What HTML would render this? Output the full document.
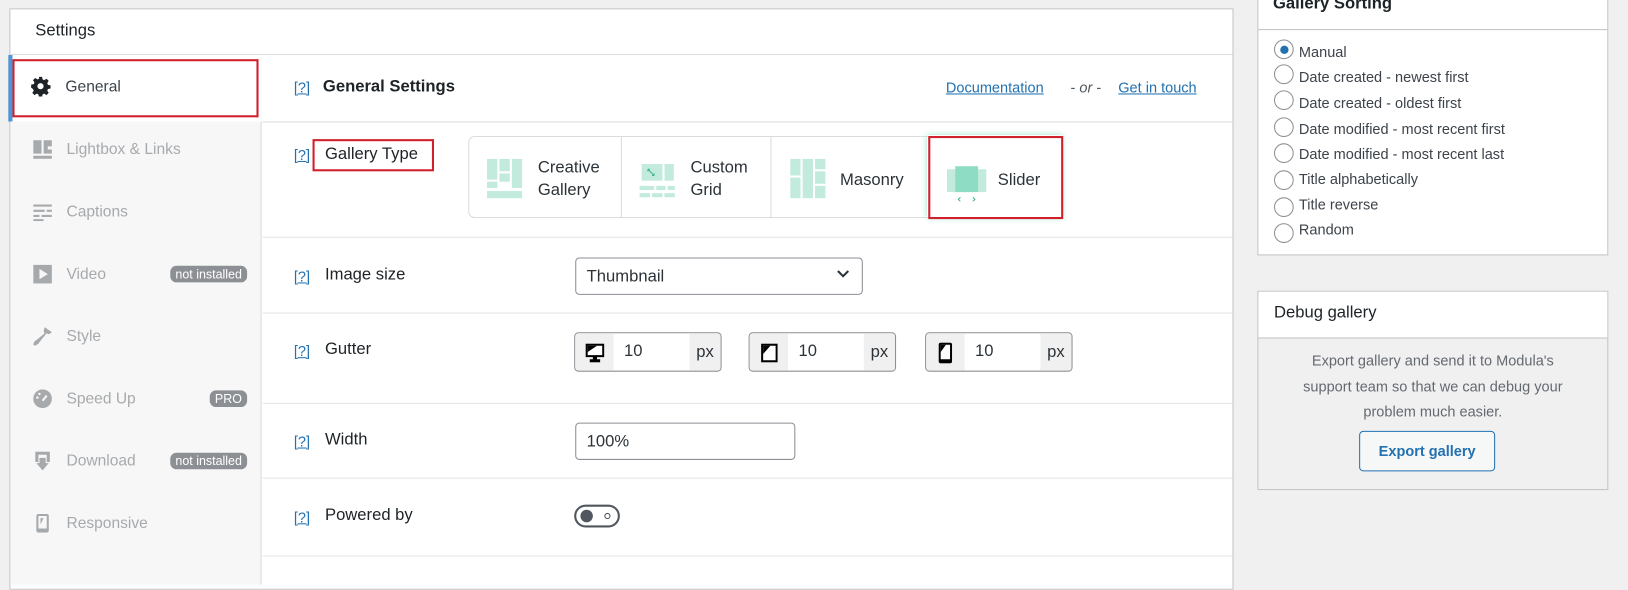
<!DOCTYPE html>
<html><head><meta charset="utf-8"><style>
*{box-sizing:border-box;margin:0;padding:0}
body{width:1628px;height:560px;background:#f0f0f1;font-family:"Liberation Sans",sans-serif;position:relative;overflow:hidden;color:#1d2327}
#w{position:absolute;left:0;top:0;width:1568px;height:540px;transform:scale(1.0383);transform-origin:0 0}
.a{position:absolute}
.panel{left:9px;top:8px;width:1179px;height:560px;background:#fff;border:1px solid #c3c4c7}
.side{left:10px;top:53px;width:242px;height:510px;background:#f7f7f7;border-right:1px solid #dcdcde}
.tab{left:10px;width:242px;height:60px;font-size:15px;color:#a7aaad}
.tab span.t{position:absolute;left:54px;top:50%;transform:translateY(-50%)}
.tab .ic{position:absolute;left:22px;top:50%;transform:translateY(-50%);width:18px;height:18px}
.badge{position:absolute;right:14px;top:50%;transform:translateY(-50%);background:#8c8f94;color:#fff;font-size:12px;border-radius:6px;padding:1px 5px}
.q{color:#2271b1;font-size:14px;text-decoration:underline}
.lbl{font-size:16px;color:#1d2327}
.hr{height:1px;background:#e5e5e5;left:253px;width:934px}
.inp{border:1px solid #8c8f94;border-radius:4px;background:#fff;font-size:16px;color:#2c3338}
.grp{height:38px;width:142px;border:1px solid #8c8f94;border-radius:4px;overflow:hidden;background:#fff}
.grp .l{position:absolute;left:0;top:0;width:37px;height:100%;background:#f0f0f1}
.grp .r{position:absolute;right:0;top:0;width:30px;height:100%;background:#f0f0f1;font-size:16px;text-align:center;line-height:38px;color:#2c3338}
.grp .v{position:absolute;left:47px;top:9px;font-size:16px;color:#2c3338}
.gt{font-size:16px;color:#2c3338;line-height:22px}
.radio{width:19px;height:19px;border:1px solid #8c8f94;border-radius:50%;background:#fff}
.ro{font-size:14px;color:#3c434a}
</style></head><body><div id="w">
<div class="a panel"></div>
<div class="a" style="left:34px;top:21px;font-size:16px;">Settings</div>
<div class="a" style="left:10px;top:52px;width:1177px;height:1px;background:#dcdcde"></div>
<div class="a side"></div>
<div class="a" style="left:10px;top:53px;width:242px;height:64px;background:#fff"></div>
<div class="a" style="left:8px;top:53px;width:4px;height:64px;background:#4f94d4"></div>
<div class="a" style="left:12px;top:57px;width:237px;height:56px;border:2px solid #d0202b"></div>
<svg class="a" style="left:29px;top:73px" width="20" height="20" viewBox="0 0 20 20"><path fill="#1d2327" d="M8.5 1h3l.5 2.5 1.6.7 2.2-1.4 2.1 2.1-1.4 2.2.7 1.6 2.5.5v3l-2.5.5-.7 1.6 1.4 2.2-2.1 2.1-2.2-1.4-1.6.7-.5 2.5h-3l-.5-2.5-1.6-.7-2.2 1.4-2.1-2.1 1.4-2.2-.7-1.6L1 11.5v-3l2.5-.5.7-1.6-1.4-2.2 2.1-2.1 2.2 1.4 1.6-.7zM10 7a3 3 0 100 6 3 3 0 000-6z"/></svg>
<div class="a" style="left:63px;top:75px;font-size:15px;color:#3c434a">General</div>

<div class="a tab" style="top:114px"><svg class="ic" viewBox="0 0 18 18"><path fill="#a7aaad" d="M0 0h8v13H0zM10 0h8v6h-4v3h4v4h-8zM0 15h18v3H0z"/></svg><span class="t">Lightbox &amp; Links</span></div>
<div class="a tab" style="top:174px"><svg class="ic" viewBox="0 0 18 18"><path fill="#a7aaad" d="M0 2h18v2H0zM0 7h11v2H0zM13 7h5v2h-5zM0 12h6v2H0zM8 12h10v2H8zM0 16h10v2H0z"/></svg><span class="t">Captions</span></div>
<div class="a tab" style="top:234px"><svg class="ic" viewBox="0 0 18 18"><rect width="18" height="18" fill="#a7aaad"/><path fill="#f7f7f7" d="M6 4l8 5-8 5z"/></svg><span class="t">Video</span><span class="badge">not installed</span></div>
<div class="a tab" style="top:294px"><svg class="ic" viewBox="0 0 18 18"><path fill="#a7aaad" d="M11 0l7 5-3 2-2-1-5 6-3 4-3 2-2-1 1-3 4-3 6-5-1-2z"/></svg><span class="t">Style</span></div>
<div class="a tab" style="top:354px"><svg class="ic" viewBox="0 0 18 18"><circle cx="9" cy="9" r="9" fill="#a7aaad"/><path stroke="#f7f7f7" stroke-width="2" d="M9 11l4-5"/><circle cx="4" cy="8" r="1.2" fill="#f7f7f7"/><circle cx="6" cy="4.5" r="1.2" fill="#f7f7f7"/></svg><span class="t">Speed Up</span><span class="badge">PRO</span></div>
<div class="a tab" style="top:414px"><svg class="ic" viewBox="0 0 18 18"><path fill="#a7aaad" d="M2 0h14v10h-3V3H5v7H2zM6 6h6v5h3l-6 7-6-7h3z"/></svg><span class="t">Download</span><span class="badge">not installed</span></div>
<div class="a tab" style="top:474px"><svg class="ic" viewBox="0 0 18 18"><rect x="3" y="0" width="12" height="18" rx="2" fill="#a7aaad"/><path fill="#f7f7f7" d="M5 2h8v12H5z"/><path fill="#a7aaad" d="M7 4h3l-3 6z"/></svg><span class="t">Responsive</span></div>

<div class="a q" style="left:283px;top:76px">[?]</div>
<div class="a" style="left:311px;top:75px;font-size:16px;font-weight:bold">General Settings</div>
<div class="a" style="left:911px;top:76px;font-size:14px;color:#2271b1;text-decoration:underline">Documentation</div>
<div class="a" style="left:1031px;top:76px;font-size:14px;color:#50575e"> - <i>or</i> - </div>
<div class="a" style="left:1077px;top:76px;font-size:14px;color:#2271b1;text-decoration:underline">Get in touch</div>
<div class="a hr" style="top:117px;background:#dcdcde"></div>

<div class="a q" style="left:283px;top:141px">[?]</div>
<div class="a" style="left:301px;top:134px;width:117px;height:31px;border:2px solid #d0202b"></div>
<div class="a lbl" style="left:313px;top:140px">Gallery Type</div>
<div class="a" style="left:451px;top:131px;width:570px;height:79px;border:1px solid #dcdcde;border-radius:6px"></div>
<div class="a" style="left:598px;top:132px;width:1px;height:77px;background:#dcdcde"></div>
<div class="a" style="left:742px;top:132px;width:1px;height:77px;background:#dcdcde"></div>
<svg class="a" style="left:469px;top:153px" width="34" height="38"><g fill="#c2ebde"><rect x="0" y="0" width="10" height="20"/><rect x="12" y="0" width="10" height="12"/><rect x="24" y="0" width="10" height="28"/><rect x="12" y="14" width="10" height="8"/><rect x="0" y="22" width="10" height="6"/><rect x="0" y="31" width="34" height="7"/></g></svg>
<div class="a gt" style="left:518px;top:151px">Creative<br>Gallery</div>
<svg class="a" style="left:616px;top:156px" width="34" height="36"><g fill="#c2ebde"><rect x="2" y="2" width="20" height="16"/><rect x="24" y="2" width="9" height="16"/><rect x="0" y="23" width="14" height="4"/><rect x="16" y="23" width="9" height="4"/><rect x="27" y="23" width="7" height="4"/><rect x="0" y="30" width="10" height="4"/><rect x="12" y="30" width="10" height="4"/><rect x="24" y="30" width="10" height="4"/></g><path d="M8 7l6 6M8 7v2M8 7h2M14 13h-2M14 13v-2" stroke="#3cb592" stroke-width="1"/></svg>
<div class="a gt" style="left:665px;top:151px">Custom<br>Grid</div>
<svg class="a" style="left:761px;top:153px" width="34" height="38"><g fill="#c2ebde"><rect x="0" y="0" width="10" height="16"/><rect x="12" y="0" width="10" height="38"/><rect x="24" y="0" width="10" height="10"/><rect x="0" y="18" width="10" height="20"/><rect x="24" y="12" width="10" height="12"/><rect x="24" y="26" width="10" height="12"/></g></svg>
<div class="a gt" style="left:809px;top:163px">Masonry</div>
<div class="a" style="left:893px;top:130px;width:130px;height:80px;box-shadow:0 0 6px #9fe3cc"></div>
<div class="a" style="left:894px;top:131px;width:130px;height:80px;border:2px solid #d0202b;background:#fff"></div>
<svg class="a" style="left:912px;top:160px" width="38" height="34"><rect x="0" y="3" width="38" height="22" fill="#c2ebde"/><rect x="8" y="0" width="22" height="25" fill="#8fdcc4"/><path d="M13 30l-2 2 2 2M25 30l2 2-2 2" stroke="#3cb592" fill="none" stroke-width="1"/></svg>
<div class="a gt" style="left:961px;top:163px">Slider</div>
<div class="a hr" style="top:228px"></div>

<div class="a q" style="left:283px;top:258px">[?]</div>
<div class="a lbl" style="left:313px;top:256px">Image size</div>
<div class="a inp" style="left:554px;top:248px;width:277px;height:36px;padding:9px 10px">Thumbnail</div>
<svg class="a" style="left:806px;top:260px" width="12" height="8"><path d="M1 1l5 5 5-5" stroke="#2c3338" stroke-width="2" fill="none"/></svg>
<div class="a hr" style="top:301px"></div>

<div class="a q" style="left:283px;top:330px">[?]</div>
<div class="a lbl" style="left:313px;top:328px">Gutter</div>
<div class="a grp" style="left:553px;top:320px"><div class="l"></div><div class="v">10</div><div class="r">px</div>
<svg class="a" style="left:10px;top:10px" width="18" height="18"><path fill="#000" d="M0 0h18v13H11v2h3v3H4v-3h3v-2H0z"/><path fill="#fff" d="M2 2h14v9H2z"/><path d="M2 2h9l-9 6z"/></svg></div>
<div class="a grp" style="left:721px;top:320px"><div class="l"></div><div class="v">10</div><div class="r">px</div>
<svg class="a" style="left:11px;top:10px" width="16" height="18"><path fill="#000" d="M0 0h16v18H0z"/><path fill="#fff" d="M2 2h12v14H2z"/><path d="M2 2h7L2 10z"/></svg></div>
<div class="a grp" style="left:891px;top:320px"><div class="l"></div><div class="v">10</div><div class="r">px</div>
<svg class="a" style="left:12px;top:9px" width="13" height="20"><rect width="13" height="20" rx="2"/><path fill="#fff" d="M2 2h9v14H2z"/><path d="M2 2h5L2 9z"/></svg></div>
<div class="a hr" style="top:388px"></div>

<div class="a q" style="left:283px;top:417px">[?]</div>
<div class="a lbl" style="left:313px;top:415px">Width</div>
<div class="a inp" style="left:554px;top:407px;width:212px;height:36px;padding:9px 10px">100%</div>
<div class="a hr" style="top:460px"></div>

<div class="a q" style="left:283px;top:490px">[?]</div>
<div class="a lbl" style="left:313px;top:488px">Powered by</div>
<div class="a" style="left:553px;top:486px;width:44px;height:22px;border:2px solid #50575e;border-radius:11px"></div>
<div class="a" style="left:559px;top:491px;width:12px;height:12px;border-radius:50%;background:#50575e"></div>
<div class="a" style="left:582px;top:494px;width:6px;height:6px;border-radius:50%;border:1px solid #50575e"></div>
<div class="a hr" style="top:535px"></div>

<div class="a" style="left:1211px;top:-2px;width:338px;height:248px;background:#fff;border:1px solid #c3c4c7"></div>
<div class="a" style="left:1226px;top:-5px;font-size:16px;font-weight:bold;color:#1d2327">Gallery Sorting</div>
<div class="a" style="left:1212px;top:28px;width:336px;height:1px;background:#c3c4c7"></div>
<div class="a radio" style="left:1227px;top:38px"></div><div class="a" style="left:1233px;top:44px;width:8px;height:8px;border-radius:50%;background:#2271b1"></div>
<div class="a ro" style="left:1251px;top:42px">Manual</div>
<div class="a radio" style="left:1227px;top:62px"></div><div class="a ro" style="left:1251px;top:66px">Date created - newest first</div>
<div class="a radio" style="left:1227px;top:87px"></div><div class="a ro" style="left:1251px;top:91px">Date created - oldest first</div>
<div class="a radio" style="left:1227px;top:113px"></div><div class="a ro" style="left:1251px;top:116px">Date modified - most recent first</div>
<div class="a radio" style="left:1227px;top:138px"></div><div class="a ro" style="left:1251px;top:140px">Date modified - most recent last</div>
<div class="a radio" style="left:1227px;top:164px"></div><div class="a ro" style="left:1251px;top:164px">Title alphabetically</div>
<div class="a radio" style="left:1227px;top:190px"></div><div class="a ro" style="left:1251px;top:189px">Title reverse</div>
<div class="a radio" style="left:1227px;top:215px"></div><div class="a ro" style="left:1251px;top:213px">Random</div>

<div class="a" style="left:1211px;top:280px;width:338px;height:192px;background:#f0f0f1;border:1px solid #c3c4c7"></div>
<div class="a" style="left:1212px;top:281px;width:336px;height:45px;background:#fff;border-bottom:1px solid #c3c4c7"></div>
<div class="a" style="left:1227px;top:293px;font-size:16px;color:#1d2327">Debug gallery</div>
<div class="a" style="left:1212px;top:335px;width:336px;text-align:center;font-size:14px;line-height:24.5px;color:#646970">Export gallery and send it to Modula's<br>support team so that we can debug your<br>problem much easier.</div>
<div class="a" style="left:1309px;top:415px;width:131px;height:39px;border:1px solid #2271b1;border-radius:4px;background:#f6f7f7;color:#2271b1;font-weight:bold;font-size:14px;text-align:center;line-height:37px">Export gallery</div>
</div></body></html>
